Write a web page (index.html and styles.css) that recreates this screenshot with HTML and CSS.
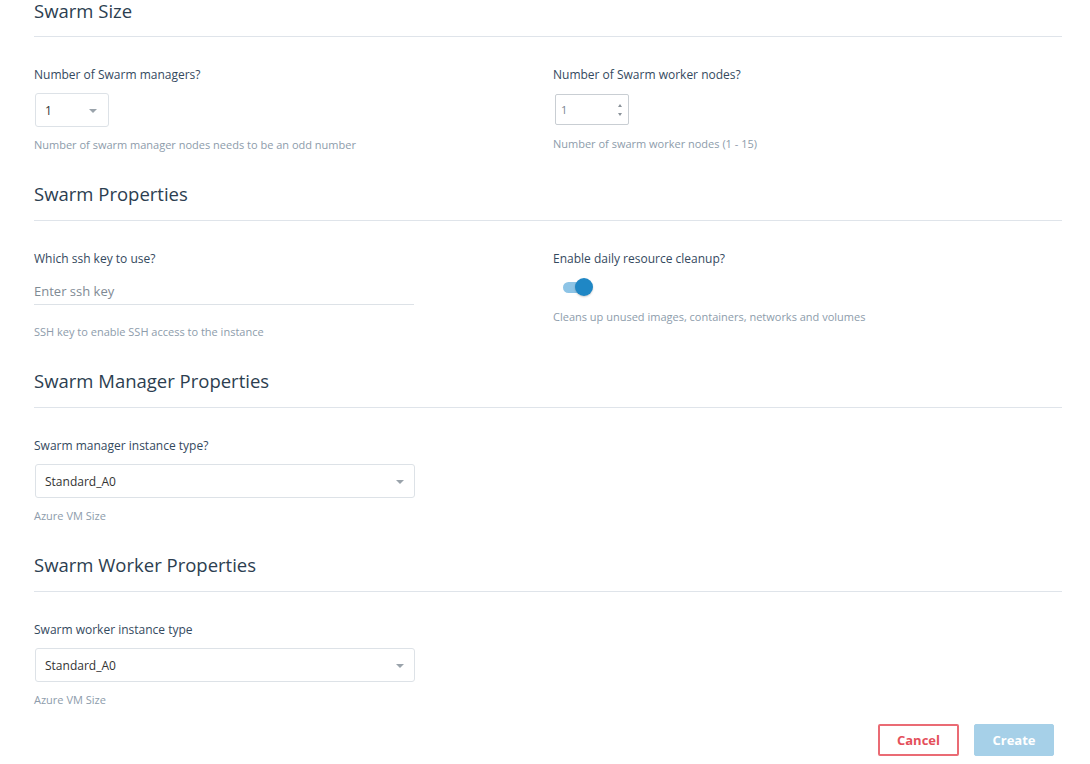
FILE: index.html
```html
<!DOCTYPE html>
<html>
<head>
<meta charset="utf-8">
<link rel="stylesheet" href="styles.css">
</head>
<body>
<div class="page">
  <section class="section first">
    <h2 class="heading">Swarm Size</h2>
    <div class="grid">
      <div class="field">
        <label class="label">Number of Swarm managers?</label>
        <div class="select small"><span>1</span><span class="caret"></span></div>
        <p class="help">Number of swarm manager nodes needs to be an odd number</p>
      </div>
      <div class="field">
        <label class="label">Number of Swarm worker nodes?</label>
        <div class="number"><span>1</span><span class="spin"><span class="up"></span><span class="down"></span></span></div>
        <p class="help help-num">Number of swarm worker nodes (1 - 15)</p>
      </div>
    </div>
  </section>

  <section class="section">
    <h2 class="heading">Swarm Properties</h2>
    <div class="grid">
      <div class="field">
        <label class="label">Which ssh key to use?</label>
        <div class="text-input">Enter ssh key</div>
        <p class="help help-text">SSH key to enable SSH access to the instance</p>
      </div>
      <div class="field">
        <label class="label">Enable daily resource cleanup?</label>
        <div class="toggle"><span class="track"></span><span class="knob"></span></div>
        <p class="help help-toggle">Cleans up unused images, containers, networks and volumes</p>
      </div>
    </div>
  </section>

  <section class="section">
    <h2 class="heading">Swarm Manager Properties</h2>
    <div class="grid">
      <div class="field">
        <label class="label">Swarm manager instance type?</label>
        <div class="select wide"><span>Standard_A0</span><span class="caret"></span></div>
        <p class="help">Azure VM Size</p>
      </div>
    </div>
  </section>

  <section class="section last">
    <h2 class="heading">Swarm Worker Properties</h2>
    <div class="grid">
      <div class="field">
        <label class="label">Swarm worker instance type</label>
        <div class="select wide"><span>Standard_A0</span><span class="caret"></span></div>
        <p class="help">Azure VM Size</p>
      </div>
    </div>
  </section>

  <div class="actions">
    <button class="btn btn-cancel">Cancel</button>
    <button class="btn btn-create">Create</button>
  </div>
</div>
</body>
</html>
```

FILE: styles.css
```css
* { box-sizing: border-box; }
html, body { margin: 0; padding: 0; background: #fff; }
body {
  font-family: "Open Sans", "Noto Sans", "Liberation Sans", sans-serif;
  color: #34495e;
}
.page {
  padding: 0 28px 0 34px;
}
.section {
  padding-bottom: 29px;
}
.section.last { padding-bottom: 0; }
.heading {
  margin: 0;
  font-size: 18.5px;
  line-height: 22px;
  font-weight: 400;
  color: #2c3e50;
  padding-top: 1px;
  padding-bottom: 15px;
  border-bottom: 1px solid #dfe4ea;
}
.first .heading { padding-top: 0; padding-bottom: 14px; }
.grid {
  display: grid;
  grid-template-columns: 1fr 1fr;
  column-gap: 10px;
  padding-top: 28px;
}
.field { display: flex; flex-direction: column; align-items: flex-start; }
.label {
  font-size: 12px;
  line-height: 18px;
  padding-top: 1px;
  color: #34495e;
}
.help {
  margin: 10px 0 0;
  font-size: 11px;
  line-height: 16px;
  color: #8d9cab;
}
.help-num { margin-top: 11px; }
.help-text { margin-top: 19px; }
.help-toggle { margin-top: 12px; }

.select {
  margin-top: 9px;
  height: 34px;
  border: 1px solid #dde2e7;
  border-radius: 3px;
  display: flex;
  align-items: center;
  justify-content: space-between;
  padding: 0 10px 0 9px;
  font-size: 12px;
  color: #333;
}
.select.small { width: 74px; margin-left: 1px; padding-right: 11px; }
.select.wide { width: 380px; margin-left: 1px; }
.caret {
  width: 0; height: 0;
  border-left: 4px solid transparent;
  border-right: 4px solid transparent;
  border-top: 4px solid #9aa3ab;
  margin-top: 1px;
}
.number {
  margin-top: 10px;
  margin-left: 2px;
  width: 74px;
  height: 31px;
  border: 1px solid #c9ced3;
  border-radius: 2px;
  display: flex;
  align-items: center;
  justify-content: space-between;
  padding: 0 6px 0 5px;
  font-size: 11px;
  color: #7a858f;
}
.spin { display: flex; flex-direction: column; gap: 6px; }
.up, .down { width: 0; height: 0; border-left: 2.5px solid transparent; border-right: 2.5px solid transparent; }
.up { border-bottom: 3px solid #8a9299; }
.down { border-top: 3px solid #8a9299; }

.text-input {
  margin-top: 9px;
  width: 380px;
  height: 28px;
  padding-top: 1px;
  border-bottom: 1px solid #dde2e7;
  font-size: 13px;
  line-height: 26px;
  color: #7f8a94;
}
.toggle {
  margin-top: 9px;
  margin-left: 10px;
  width: 30px;
  height: 20px;
  position: relative;
}
.track {
  position: absolute;
  left: 0; top: 5px;
  width: 29px; height: 11px;
  border-radius: 6px;
  background: #8dc4e6;
}
.knob {
  position: absolute;
  left: 12px; top: 1px;
  width: 18px; height: 18px;
  border-radius: 50%;
  background: #1f87c5;
  box-shadow: 0 1px 2px rgba(0,0,0,0.2);
}

.actions {
  display: flex;
  justify-content: flex-end;
  gap: 15px;
  margin-top: 16px;
  padding-right: 8px;
}
.btn {
  height: 32px;
  width: 80px;
  font-family: inherit;
  font-size: 13px;
  font-weight: 700;
  border-radius: 2px;
  padding: 0;
}
.btn-cancel {
  background: #fff;
  border: 2px solid #ea6b74;
  color: #e4505b;
  width: 81px;
}
.btn-create {
  background: #a6d0e8;
  border: 1px solid #a6d0e8;
  color: #fff;
}
```
